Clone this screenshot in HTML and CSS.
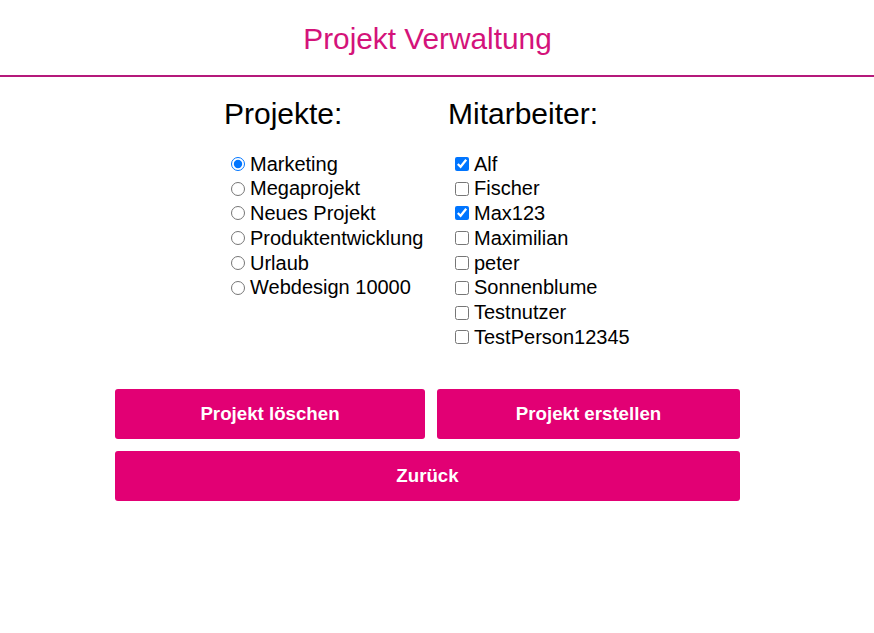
FILE: index.html
```html
<!DOCTYPE html>
<html lang="de">
<head>
<meta charset="utf-8">
<title>Projekt Verwaltung</title>
<link rel="stylesheet" href="styles.css">
</head>
<body>
<header class="site-header">
  <div class="container">
    <h1 class="title">Projekt Verwaltung</h1>
  </div>
</header>
<main class="container">
  <div class="columns">
    <section class="column">
      <h2 class="column-title">Projekte:</h2>
      <ul class="choice-list">
        <li><label class="choice"><input type="radio" name="projekt" checked><span>Marketing</span></label></li>
        <li><label class="choice"><input type="radio" name="projekt"><span>Megaprojekt</span></label></li>
        <li><label class="choice"><input type="radio" name="projekt"><span>Neues Projekt</span></label></li>
        <li><label class="choice"><input type="radio" name="projekt"><span>Produktentwicklung</span></label></li>
        <li><label class="choice"><input type="radio" name="projekt"><span>Urlaub</span></label></li>
        <li><label class="choice"><input type="radio" name="projekt"><span>Webdesign 10000</span></label></li>
      </ul>
    </section>
    <section class="column">
      <h2 class="column-title">Mitarbeiter:</h2>
      <ul class="choice-list">
        <li><label class="choice"><input type="checkbox" checked><span>Alf</span></label></li>
        <li><label class="choice"><input type="checkbox"><span>Fischer</span></label></li>
        <li><label class="choice"><input type="checkbox" checked><span>Max123</span></label></li>
        <li><label class="choice"><input type="checkbox"><span>Maximilian</span></label></li>
        <li><label class="choice"><input type="checkbox"><span>peter</span></label></li>
        <li><label class="choice"><input type="checkbox"><span>Sonnenblume</span></label></li>
        <li><label class="choice"><input type="checkbox"><span>Testnutzer</span></label></li>
        <li><label class="choice"><input type="checkbox"><span>TestPerson12345</span></label></li>
      </ul>
    </section>
  </div>
  <div class="actions">
    <button class="btn" type="button">Projekt löschen</button>
    <button class="btn" type="button">Projekt erstellen</button>
    <button class="btn btn-wide" type="button">Zurück</button>
  </div>
</main>
</body>
</html>
```

FILE: styles.css
```css
html, body {
  margin: 0;
  padding: 0;
  background: #ffffff;
}

body {
  font-family: "Liberation Sans", Arial, sans-serif;
  color: #000000;
}

.container {
  width: 855px;
}

.site-header {
  padding: 22px 0 19px;
  border-bottom: 2px solid #b5197b;
}

.title {
  margin: 0;
  text-align: center;
  font-size: 29.8px;
  font-weight: normal;
  line-height: 34px;
  color: #d4137a;
}

.columns {
  display: grid;
  grid-template-columns: 224px 183px;
  justify-content: center;
  margin-top: 20px;
}

.column-title {
  margin: 0;
  font-size: 30px;
  font-weight: normal;
  line-height: 34.5px;
}

.choice-list {
  list-style: none;
  margin: 20px 0 0;
  padding: 0 0 0 7px;
}

.choice-list li {
  height: 24.8px;
}

.choice {
  display: flex;
  align-items: center;
  height: 24.8px;
  font-size: 20px;
  line-height: 24.8px;
  white-space: nowrap;
}

.choice input {
  margin: 0 5px 0 0;
  width: 14px;
  height: 14px;
}

.actions {
  display: grid;
  grid-template-columns: 310px 303px;
  gap: 12px;
  justify-content: center;
  margin-top: 39px;
}

.btn {
  height: 50px;
  border: 0;
  border-radius: 3px;
  background: #e20074;
  color: #ffffff;
  font-family: "Liberation Sans", Arial, sans-serif;
  font-size: 18.7px;
  font-weight: bold;
  padding: 0;
}

.btn-wide {
  grid-column: 1 / -1;
}
```
